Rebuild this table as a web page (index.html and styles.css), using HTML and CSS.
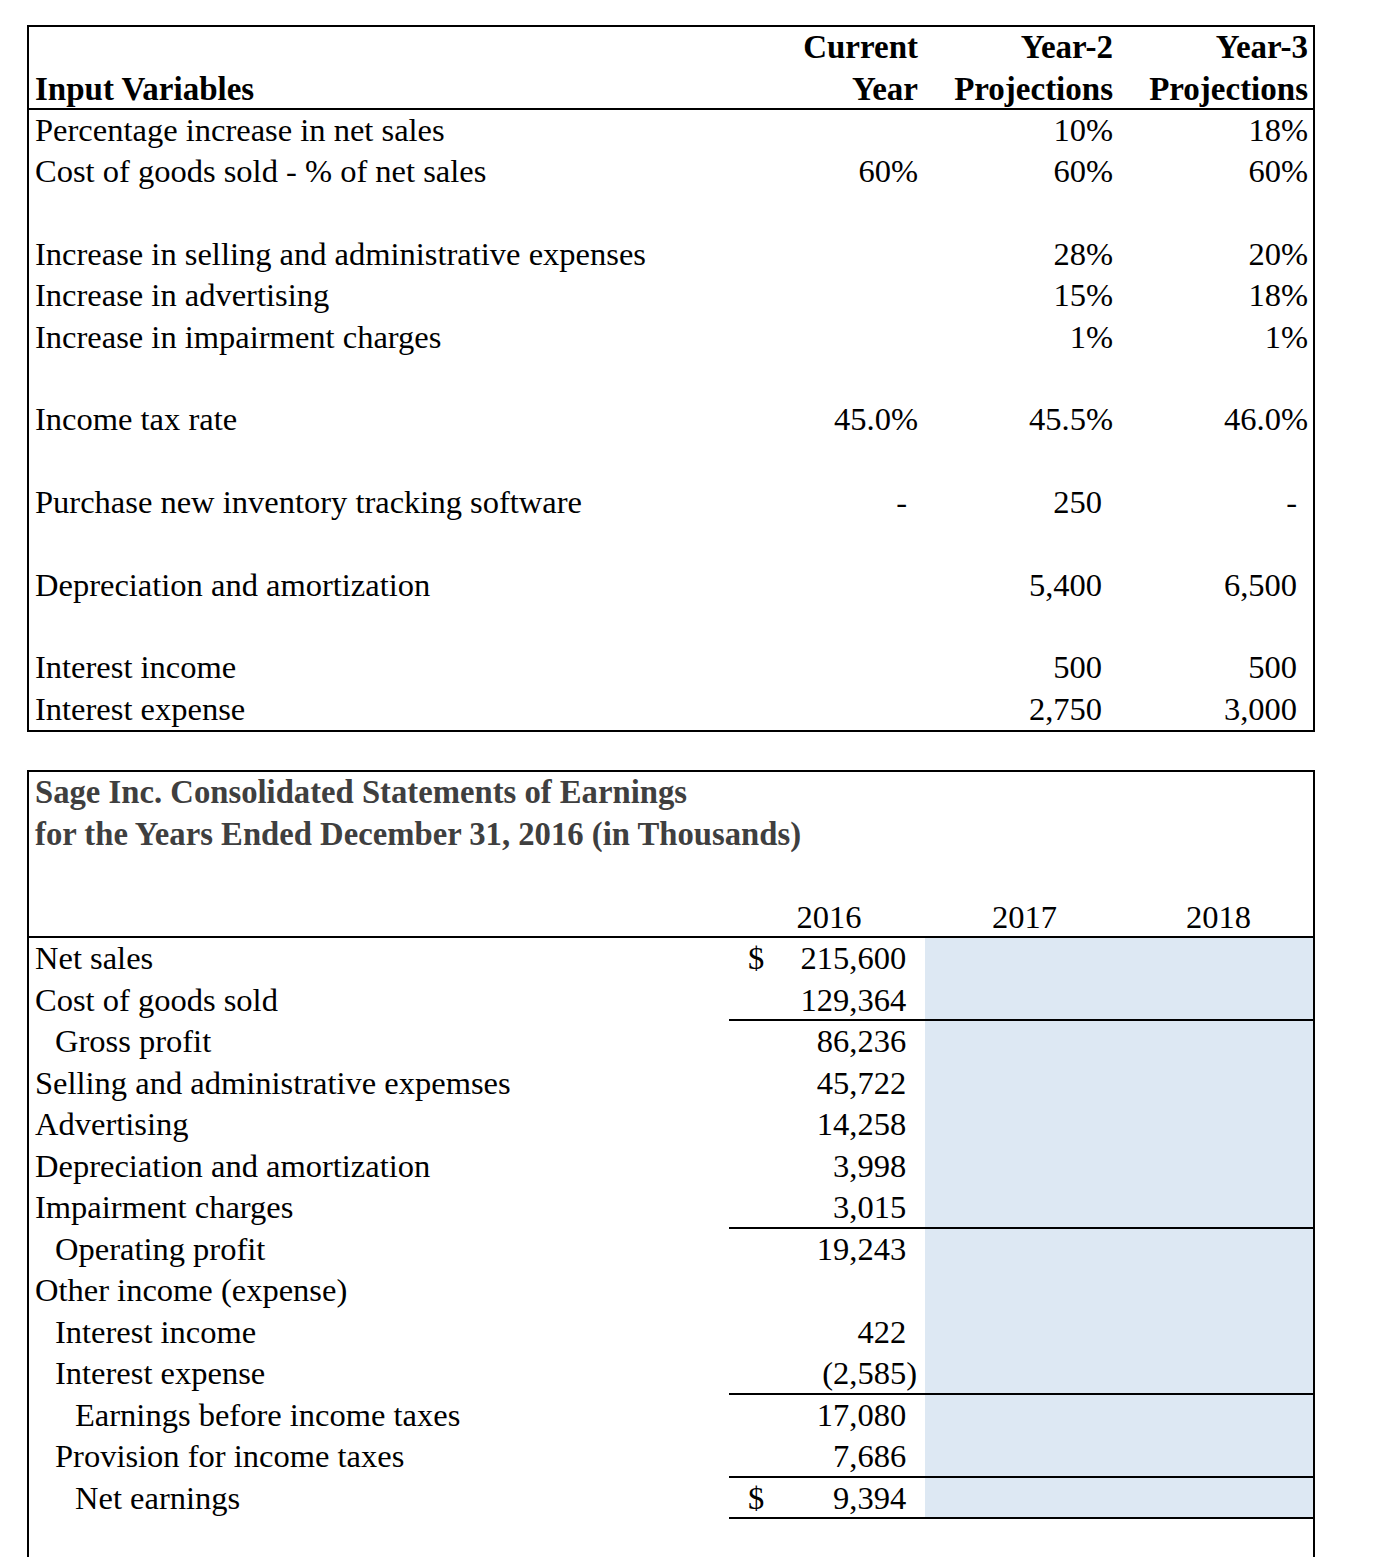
FILE: index.html
```html
<!DOCTYPE html>
<html lang="en">
<head>
<meta charset="utf-8">
<title>Input Variables and Sage Inc. Statements of Earnings</title>
<link rel="stylesheet" href="styles.css">
</head>
<body>
<div class="page">
  <div class="sheet">
    <table class="grid inputs">
      <colgroup>
        <col class="c-label1"><col class="c-val"><col class="c-val"><col class="c-last">
      </colgroup>
      <tbody>
        <tr class="hdr">
          <td></td><td class="r b">Current</td><td class="r b">Year-2</td><td class="r b last">Year-3</td>
        </tr>
        <tr class="hdr rule">
          <td class="b">Input Variables</td><td class="r b">Year</td><td class="r b">Projections</td><td class="r b last">Projections</td>
        </tr>
        <tr><td>Percentage increase in net sales</td><td></td><td class="r">10%</td><td class="r last">18%</td></tr>
        <tr><td>Cost of goods sold - % of net sales</td><td class="r">60%</td><td class="r">60%</td><td class="r last">60%</td></tr>
        <tr><td></td><td></td><td></td><td></td></tr>
        <tr><td>Increase in selling and administrative expenses</td><td></td><td class="r">28%</td><td class="r last">20%</td></tr>
        <tr><td>Increase in advertising</td><td></td><td class="r">15%</td><td class="r last">18%</td></tr>
        <tr><td>Increase in impairment charges</td><td></td><td class="r">1%</td><td class="r last">1%</td></tr>
        <tr><td></td><td></td><td></td><td></td></tr>
        <tr><td>Income tax rate</td><td class="r">45.0%</td><td class="r">45.5%</td><td class="r last">46.0%</td></tr>
        <tr><td></td><td></td><td></td><td></td></tr>
        <tr><td>Purchase new inventory tracking software</td><td class="r acct">-</td><td class="r acct">250</td><td class="r acct last">-</td></tr>
        <tr><td></td><td></td><td></td><td></td></tr>
        <tr><td>Depreciation and amortization</td><td></td><td class="r acct">5,400</td><td class="r acct last">6,500</td></tr>
        <tr><td></td><td></td><td></td><td></td></tr>
        <tr><td>Interest income</td><td></td><td class="r acct">500</td><td class="r acct last">500</td></tr>
        <tr><td>Interest expense</td><td></td><td class="r acct">2,750</td><td class="r acct last">3,000</td></tr>
      </tbody>
    </table>
  </div>

  <div class="sheet open">
    <table class="grid earnings">
      <colgroup>
        <col class="c-label2"><col class="c-2016"><col class="c-2017"><col class="c-2018">
      </colgroup>
      <tbody>
        <tr><td class="title" colspan="4">Sage Inc. Consolidated Statements of Earnings</td></tr>
        <tr><td class="title" colspan="4">for the Years Ended December 31, 2016 (in Thousands)</td></tr>
        <tr><td></td><td></td><td></td><td></td></tr>
        <tr class="rule">
          <td></td><td class="c">2016</td><td class="c">2017</td><td class="c">2018</td>
        </tr>
        <tr><td>Net sales</td><td class="money"><span>$</span><span class="pos">215,600</span></td><td class="fill"></td><td class="fill"></td></tr>
        <tr class="sum"><td>Cost of goods sold</td><td class="money"><span class="pos">129,364</span></td><td class="fill"></td><td class="fill"></td></tr>
        <tr><td class="i1">Gross profit</td><td class="money"><span class="pos">86,236</span></td><td class="fill"></td><td class="fill"></td></tr>
        <tr><td>Selling and administrative expemses</td><td class="money"><span class="pos">45,722</span></td><td class="fill"></td><td class="fill"></td></tr>
        <tr><td>Advertising</td><td class="money"><span class="pos">14,258</span></td><td class="fill"></td><td class="fill"></td></tr>
        <tr><td>Depreciation and amortization</td><td class="money"><span class="pos">3,998</span></td><td class="fill"></td><td class="fill"></td></tr>
        <tr class="sum"><td>Impairment charges</td><td class="money"><span class="pos">3,015</span></td><td class="fill"></td><td class="fill"></td></tr>
        <tr><td class="i1">Operating profit</td><td class="money"><span class="pos">19,243</span></td><td class="fill"></td><td class="fill"></td></tr>
        <tr><td>Other income (expense)</td><td class="money"></td><td class="fill"></td><td class="fill"></td></tr>
        <tr><td class="i1">Interest income</td><td class="money"><span class="pos">422</span></td><td class="fill"></td><td class="fill"></td></tr>
        <tr class="sum"><td class="i1">Interest expense</td><td class="money"><span>(2,585)</span></td><td class="fill"></td><td class="fill"></td></tr>
        <tr><td class="i2">Earnings before income taxes</td><td class="money"><span class="pos">17,080</span></td><td class="fill"></td><td class="fill"></td></tr>
        <tr class="sum"><td class="i1">Provision for income taxes</td><td class="money"><span class="pos">7,686</span></td><td class="fill"></td><td class="fill"></td></tr>
        <tr class="sum"><td class="i2">Net earnings</td><td class="money"><span>$</span><span class="pos">9,394</span></td><td class="fill"></td><td class="fill"></td></tr>
        <tr><td></td><td></td><td></td><td></td></tr>
      </tbody>
    </table>
  </div>
</div>
</body>
</html>
```

FILE: styles.css
```css
html, body {
  margin: 0;
  padding: 0;
  background: #ffffff;
}

body {
  font-family: "Liberation Serif", "Times New Roman", Times, serif;
  font-size: 32.5px;
  color: #000000;
}

.page {
  padding: 25px 0 0 27px;
}

.sheet {
  width: 1288px;
  box-sizing: border-box;
  border: 2px solid #000000;
}

.sheet.open {
  border-bottom: none;
  margin-top: 38px;
}

.grid {
  width: 100%;
  border-spacing: 0;
  table-layout: fixed;
}

.grid td {
  height: 41.5px;
  padding: 0 2px 0 6px;
  line-height: 41.5px;
  white-space: nowrap;
  vertical-align: middle;
}

.inputs tr:not(.hdr) td {
  height: 41.35px;
  line-height: 41.35px;
}

.c-label1 { width: 696px; }
.c-val { width: 195px; }
.c-last { width: 198px; }

.c-label2 { width: 700px; }
.c-2016 { width: 196px; }
.c-2017 { width: 195px; }
.c-2018 { width: 193px; }

.r { text-align: right; }
.c { text-align: center; }
.b { font-weight: bold; font-size: 33px; }

.grid td.last { padding-right: 5px; }

.grid td.acct { padding-right: 13px; }
.grid td.acct.last { padding-right: 16px; }

.rule td {
  box-shadow: inset 0 -2px 0 #000000;
}

.title {
  font-weight: bold;
  font-size: 32.7px;
  color: #3f3f3f;
}

.i1 { text-indent: 20px; }
.i2 { text-indent: 40px; }

.grid td.money {
  padding: 0 8px 0 19px;
  text-align: right;
}

.money span:first-child:not(:last-child) {
  float: left;
}

.pos {
  padding-right: 0.333em;
}

.fill {
  background: #dde8f3;
}

.sum td:not(:first-child) {
  box-shadow: inset 0 -2px 0 #000000;
}
```
